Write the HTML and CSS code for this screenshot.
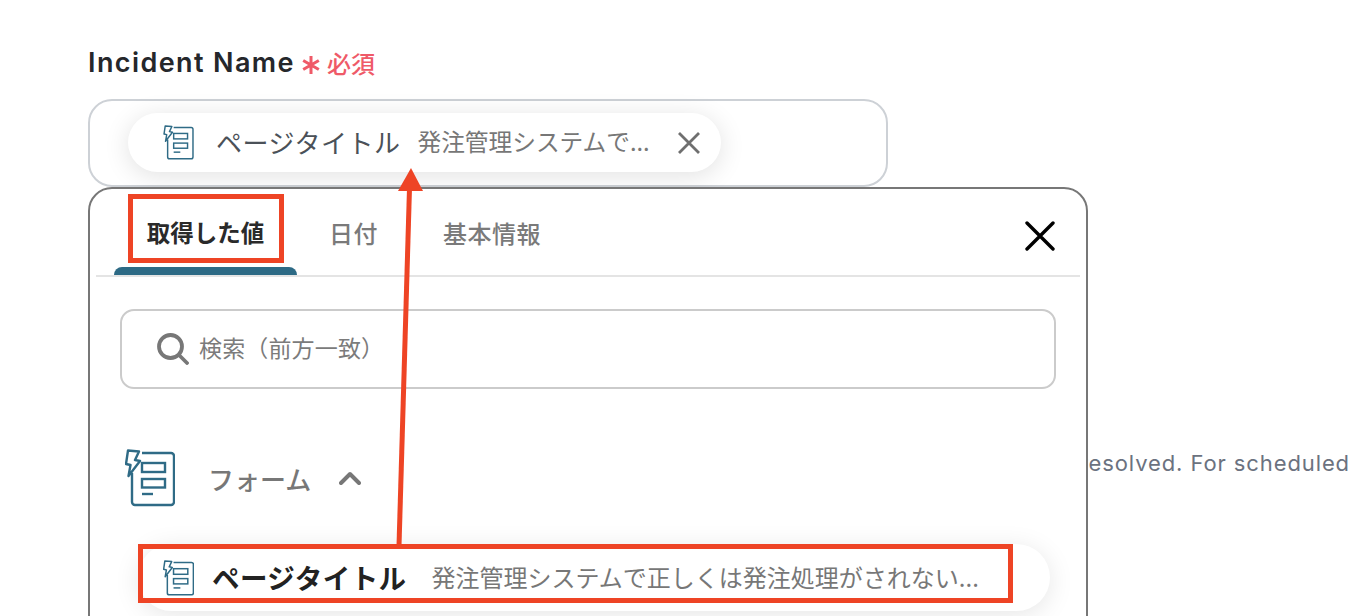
FILE: index.html
```html
<!DOCTYPE html>
<html lang="ja">
<head>
<meta charset="utf-8">
<title>Incident Name</title>
<link rel="stylesheet" href="styles.css">
</head>
<body>
<svg class="defs" width="0" height="0" aria-hidden="true">
  <symbol id="form-icon" viewBox="0 0 50 58">
    <path d="M17 4H46a3 3 0 0 1 3 3V53a3 3 0 0 1-3 3H10a3 3 0 0 1-3-3V24" fill="none" stroke="currentColor" stroke-width="2.4"/>
    <path d="M3 1.5 14 2.500 10 11 15 12 3.500 27 5.500 16 1 15Z" fill="#fff" stroke="currentColor" stroke-width="2.4" stroke-linejoin="round"/>
    <rect x="17" y="14" width="23" height="9" fill="none" stroke="currentColor" stroke-width="2.4"/>
    <rect x="17" y="30" width="23" height="8.500" fill="none" stroke="currentColor" stroke-width="2.4"/>
    <path d="M17 45H28" fill="none" stroke="currentColor" stroke-width="2.4"/>
  </symbol>
</svg>
<main class="page">
  <div class="label-row">
    <span class="label">Incident Name</span>
    <span class="required">
      <svg class="asterisk" viewBox="0 0 18 20"><path d="M9 1V19M1.200 5.500 16.800 14.500M16.800 5.500 1.200 14.500" fill="none" stroke="currentColor" stroke-width="3"/></svg>
      必須
    </span>
  </div>
  <div class="field">
    <div class="input-box">
      <div class="chip">
        <svg class="chip-icon"><use href="#form-icon"/></svg>
        <span class="chip-title">ページタイトル</span>
        <span class="chip-value">発注管理システムで...</span>
        <svg class="chip-close" viewBox="0 0 24 24"><path d="M2 2 22 22M22 2 2 22" fill="none" stroke="currentColor" stroke-width="2.800"/></svg>
      </div>
    </div>
    <p class="help">A short name that stays visible until the incident is resolved. For scheduled</p>
    <section class="panel">
      <div class="tabs">
        <div class="tab active">取得した値</div>
        <div class="tab">日付</div>
        <div class="tab">基本情報</div>
        <svg class="panel-close" viewBox="0 0 30 30"><path d="M2 2 28 28M28 2 2 28" fill="none" stroke="#000" stroke-width="3.400" stroke-linecap="round"/></svg>
      </div>
      <div class="search">
        <svg class="search-icon" viewBox="0 0 32 32"><circle cx="13.500" cy="13.500" r="11.500" fill="none" stroke="currentColor" stroke-width="3.800"/><path d="M22 22 30 30" fill="none" stroke="currentColor" stroke-width="3.800" stroke-linecap="round"/></svg>
        <span class="search-text">検索（前方一致）</span>
      </div>
      <div class="group">
        <svg class="group-icon"><use href="#form-icon"/></svg>
        <span class="group-name">フォーム</span>
        <svg class="chevron" viewBox="0 0 22 14"><path d="M2 12 11 3 20 12" fill="none" stroke="currentColor" stroke-width="4" stroke-linecap="round" stroke-linejoin="round"/></svg>
      </div>
      <div class="row">
        <svg class="row-icon"><use href="#form-icon"/></svg>
        <span class="row-title">ページタイトル</span>
        <span class="row-value">発注管理システムで正しくは発注処理がされない...</span>
      </div>
    </section>
  </div>
  <div class="mark mark-tab"></div>
  <div class="mark mark-row"></div>
  <svg class="arrow" viewBox="0 0 40 390"><path d="M15.500 20 5 378" fill="none" stroke="#ee4425" stroke-width="5"/><path d="M17 0 29 23H4Z" fill="#ee4425"/></svg>
</main>
</body>
</html>
```
FILE: styles.css
```css
* { box-sizing: border-box; }
html, body { margin: 0; height: 616px; overflow: hidden; background: #fff; }
body { font-family: "Noto Sans CJK JP", "Noto Sans", sans-serif; color: #222; }
.defs { position: absolute; }
.page { position: relative; height: 616px; padding: 43px 0 0 88px; overflow: hidden; }

.label-row { display: flex; align-items: center; height: 38px; gap: 7px; }
.label { font-family: Inter, "Liberation Sans", sans-serif; font-size: 27px; font-weight: 600; letter-spacing: 1.400px; color: #25272b; }
.required { display: flex; align-items: center; gap: 7px; color: #ef5a68; font-size: 24px; font-weight: 500; }
.asterisk { width: 18px; height: 20px; margin-top: 6px; flex: none; }

.field { position: relative; margin-top: 18px; width: 800px; }
.input-box { height: 88px; border: 2px solid #cdd1d6; border-radius: 24px; padding: 12px 0 0 38px; background: #fff; }
.chip { display: flex; align-items: center; width: 593px; height: 59px; border-radius: 30px; background: #fff; box-shadow: 0 4px 26px rgba(0,0,0,.12); padding-left: 35px; }
.chip-icon { width: 31px; height: 35px; color: #2f6b86; flex: none; }
.chip-title { margin: 0 0 2px 22px; font-size: 26px; letter-spacing: .5px; color: #4b5158; white-space: nowrap; }
.chip-value { margin: 0 0 3px 17px; font-size: 23.700px; color: #777; white-space: nowrap; width: 234px; }
.chip-close { width: 24px; height: 24px; margin-left: 26px; color: #6f6f6f; flex: none; }

.help { margin: 262px 0 0 0; width: 1262px; height: 28px; font-family: Inter, "Liberation Sans", sans-serif; font-size: 22px; line-height: 28px; letter-spacing: .9px; color: #6b7280; white-space: nowrap; display: flex; justify-content: flex-end; overflow: hidden; }

.panel { position: absolute; left: 0; top: 88px; width: 1000px; height: 480px; background: #fff; border: 2px solid #777; border-radius: 24px; }
.tabs { position: relative; display: flex; height: 88px; margin: 0 6px; padding-left: 18px; border-bottom: 2px solid #e4e4e4; }
.tab { display: flex; align-items: center; justify-content: center; height: 86px; padding: 0 32px; font-size: 24px; letter-spacing: .5px; font-weight: 500; color: #7a7a7a; white-space: nowrap; }
.tab + .tab + .tab { margin-left: 1px; }
.tab.active { position: relative; width: 183px; padding: 0; font-weight: 700; font-size: 23.500px; letter-spacing: 0; color: #2a2a2a; }
.tab.active::after { content: ""; position: absolute; left: 0; right: 0; bottom: 0; height: 8px; background: #2d6a85; border-radius: 9px 9px 0 0; }
.panel-close { position: absolute; right: 25px; top: 32px; width: 30px; height: 30px; }

.search { display: flex; align-items: center; gap: 10px; height: 80px; margin: 32px 30px 0 30px; padding-left: 35px; border: 2px solid #cbcbcb; border-radius: 14px; font-size: 23px; color: #7b7b7b; }
.search-icon { width: 32px; height: 32px; color: #777; flex: none; }
.search-text { letter-spacing: .15px; margin-bottom: 4px; }

.group { display: flex; align-items: center; height: 58px; margin: 60px 0 0 35px; }
.group-icon { width: 50px; height: 58px; color: #2f6b86; flex: none; }
.group-name { margin-left: 33px; font-size: 26px; font-weight: 500; color: #777; white-space: nowrap; }
.chevron { width: 22px; height: 14px; margin-left: 28px; color: #777; }

.row { display: flex; align-items: center; width: 912px; height: 67px; margin: 37px 0 0 48px; background: #fff; border-radius: 34px; box-shadow: 0 4px 26px rgba(0,0,0,.1); padding-left: 25px; }
.row-icon { width: 31px; height: 36px; color: #2f6b86; flex: none; }
.row-title { margin: 0 0 2px 18px; font-size: 27.500px; letter-spacing: .45px; font-weight: 700; color: #222; white-space: nowrap; }
.row-value { margin: 0 0 2px 25px; font-size: 24px; color: #777; white-space: nowrap; }

.mark { position: absolute; border: 5px solid #ee4425; }
.mark-tab { left: 128px; top: 194px; width: 156px; height: 69px; }
.mark-row { left: 138px; top: 544px; width: 875px; height: 59px; }
.arrow { position: absolute; left: 394px; top: 168px; width: 40px; height: 390px; overflow: visible; }
```
